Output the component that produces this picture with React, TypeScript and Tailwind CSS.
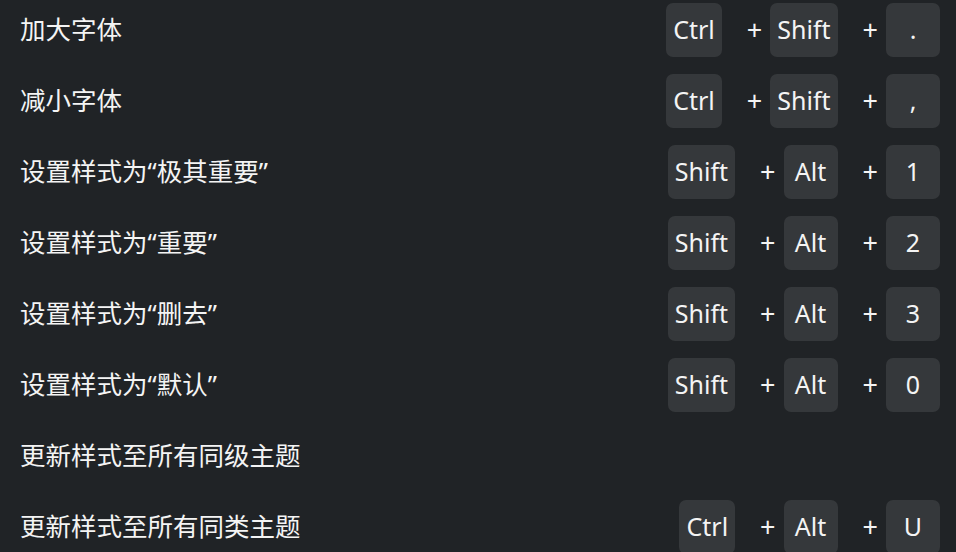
import React from "react";

type Row = { label: string; keys: string[] };

const rows: Row[] = [
  { label: "加大字体", keys: ["Ctrl", "Shift", "."] },
  { label: "减小字体", keys: ["Ctrl", "Shift", ","] },
  { label: "设置样式为“极其重要”", keys: ["Shift", "Alt", "1"] },
  { label: "设置样式为“重要”", keys: ["Shift", "Alt", "2"] },
  { label: "设置样式为“删去”", keys: ["Shift", "Alt", "3"] },
  { label: "设置样式为“默认”", keys: ["Shift", "Alt", "0"] },
  { label: "更新样式至所有同级主题", keys: [] },
  { label: "更新样式至所有同类主题", keys: ["Ctrl", "Alt", "U"] },
];

function Key({ k }: { k: string }) {
  return (
    <span className="flex h-[54px] min-w-[54px] items-center justify-center rounded-[7px] bg-[#35383b] px-[7px] text-[25px] text-[#f4f4f4]">
      {k}
    </span>
  );
}

export default function App() {
  return (
    <div
      className="h-[552px] w-[956px] overflow-hidden bg-[#202326] pt-[3px]"
      style={{ fontFamily: '"Noto Sans", "Noto Sans CJK SC", sans-serif' }}
    >
      <div className="flex flex-col gap-[17px]">
        {rows.map((r, i) => (
          <div key={i} className="flex h-[54px] items-center pl-5 pr-4">
            <span className="flex-1 -translate-y-px text-[25.5px] text-[#f4f4f4]">{r.label}</span>
            <div className="flex items-center">
              {r.keys.map((k, j) => (
                <React.Fragment key={j}>
                  {j > 0 && (
                    <span className="ml-[25px] mr-[8px] text-[27px] text-[#f4f4f4]">+</span>
                  )}
                  <Key k={k} />
                </React.Fragment>
              ))}
            </div>
          </div>
        ))}
      </div>
    </div>
  );
}
